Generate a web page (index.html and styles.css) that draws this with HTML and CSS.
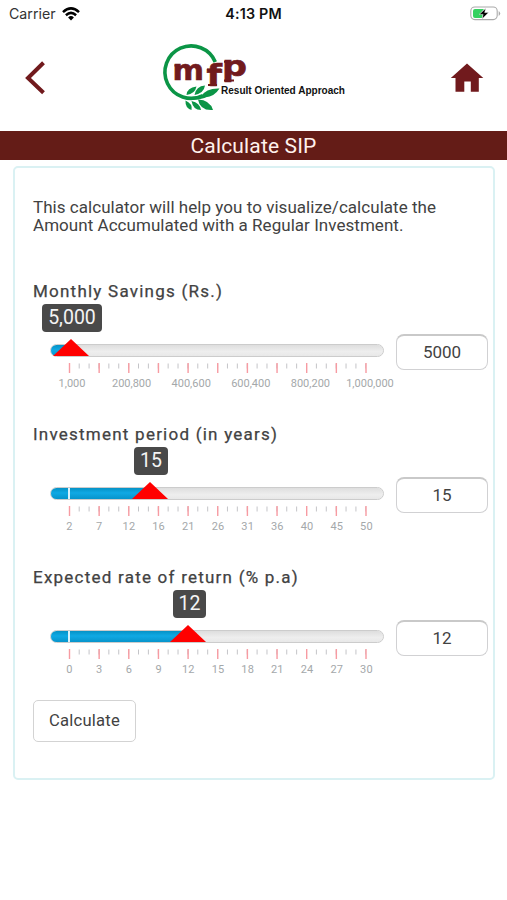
FILE: index.html
```html
<!DOCTYPE html>
<html lang="en">
<head>
<meta charset="utf-8">
<title>Calculate SIP</title>
<link rel="stylesheet" href="styles.css">
</head>
<body>
<div class="status">
  <div class="carrier">Carrier
    <svg width="18" height="14" viewBox="0 0 18 14" fill="none" stroke="#000" stroke-width="2.5"><path d="M1 5.1Q9-2.3 17 5.1M3.9 8.2Q9 3.6 14.1 8.2"/><path d="M6.1 10.4Q9 7.7 11.9 10.4L9 13.5z" fill="#000" stroke="none"/></svg>
  </div>
  <div class="time">4:13 PM</div>
  <svg class="battery" width="31" height="15" viewBox="0 0 31 15"><rect x=".8" y="1" width="26.4" height="12.6" rx="4" fill="#fff" stroke="#aaa" stroke-width="1.1"/><path d="M5 3h9l-4 5h3l-1 4H5q-2 0-2-2V5q0-2 2-2z" fill="#35d160"/><path d="M28.7 5v5q3-2.5 0-5z" fill="#aaa"/><path d="M15.800 2.200L9.200 8.400h3.900l-1 4.500 6.500-6.300h-3.900z" fill="#000" stroke="#fff" stroke-width=".5"/></svg>
</div>
<header class="header">
  <svg class="back" width="21" height="34" viewBox="0 0 21 34"><path d="M18.500 1.800L3 17l15.500 14.700" fill="none" stroke="#711a1d" stroke-width="4"/></svg>
  <svg class="logo" width="187" height="72" viewBox="160 41 187 72">
    <path d="M215.300 62A26.200 26.200 0 1 0 203 95.500" fill="none" stroke="#0b9546" stroke-width="3.600"/>
    <g fill="#0b9546">
      <path d="M188 97.500Q203 97 213 90L215 92Q204 101 189 100z"/>
      <path d="M186.500 95Q187 87.500 196.500 86.500Q195 94 186.500 95zM194.500 95Q196 86 205 85.500Q204 93 194.500 95zM201 96.500Q206 88 219.500 88.500Q213 99 201 96.500zM185.500 100.500Q193 104 191.500 110Q185 108 185.500 100.500zM191.500 101Q200 103 201 110Q193 110 191.500 101zM198 99.500Q210 100 213 110Q200 111 198 99.500z"/>
    </g>
    <g class="logo-letters">
      <text x="172.500" y="80.300" font-size="27.500" textLength="31.500" lengthAdjust="spacingAndGlyphs">m</text>
      <text x="206.500" y="85.500" font-size="30" textLength="15.500" lengthAdjust="spacingAndGlyphs">f</text>
      <text x="222" y="76.300" font-size="28.500" textLength="25" lengthAdjust="spacingAndGlyphs">p</text>
    </g>
    <path d="M174.500 65.500h4M207 69.500h14M208 85h9M224 61.800h4M224 80.500h10" fill="none" stroke="#711a1d" stroke-width="2"/>
    <text class="tagline" x="221" y="93.700" textLength="124" lengthAdjust="spacingAndGlyphs">Result Oriented Approach</text>
  </svg>
  <svg class="home" width="34" height="30" viewBox="0 0 34 30"><path d="M17 .5L33.300 15H28.800V28.800H20.800V18.500H14.300V28.800H5.500V15H.8z" fill="#711a1d"/></svg>
</header>
<h1 class="title">Calculate SIP</h1>
<main class="card">
  <p class="intro">This calculator will help you to visualize/calculate the<br>Amount Accumulated with a Regular Investment.</p>

  <section class="field">
    <h2>Monthly Savings (Rs.)</h2>
    <div class="row">
      <div class="slider savings">
        <div class="track"><div class="fill"></div></div>
        <div class="handle"><span class="bubble">5,000</span><i class="arrow"></i></div>
        <svg class="ticks" width="300" height="10"><path class="minor" d="M10.700 3H298"/><path class="major" d="M.8 5H299"/></svg>
        <div class="scale"><span>1,000</span><span>200,800</span><span>400,600</span><span>600,400</span><span>800,200</span><span>1,000,000</span></div>
      </div>
      <div class="value">5000</div>
    </div>
  </section>

  <section class="field">
    <h2>Investment period (in years)</h2>
    <div class="row">
      <div class="slider period">
        <div class="track"><div class="fill marked"></div></div>
        <div class="handle"><span class="bubble">15</span><i class="arrow"></i></div>
        <svg class="ticks" width="300" height="10"><path class="minor" d="M10.700 3H298"/><path class="major" d="M.8 5H299"/></svg>
        <div class="scale"><span>2</span><span>7</span><span>12</span><span>16</span><span>21</span><span>26</span><span>31</span><span>36</span><span>40</span><span>45</span><span>50</span></div>
      </div>
      <div class="value">15</div>
    </div>
  </section>

  <section class="field">
    <h2>Expected rate of return (% p.a)</h2>
    <div class="row">
      <div class="slider rate">
        <div class="track"><div class="fill marked"></div></div>
        <div class="handle"><span class="bubble">12</span><i class="arrow"></i></div>
        <svg class="ticks" width="300" height="10"><path class="minor" d="M10.700 3H298"/><path class="major" d="M.8 5H299"/></svg>
        <div class="scale"><span>0</span><span>3</span><span>6</span><span>9</span><span>12</span><span>15</span><span>18</span><span>21</span><span>24</span><span>27</span><span>30</span></div>
      </div>
      <div class="value">12</div>
    </div>
  </section>

  <button class="calculate">Calculate</button>
</main>
</body>
</html>
```
FILE: styles.css
```css
* { box-sizing: border-box; }
body { margin: 0; height: 900px; overflow: hidden; background: #fff; color: #424242; font-family: Roboto, sans-serif; }
svg { display: block; }

.status { display: grid; grid-template-columns: 1fr auto 1fr; height: 27px; padding: 0 6px 0 9px; align-items: center; font-family: Inter, sans-serif; color: #111; }
.carrier { display: flex; gap: 6px; align-items: center; font-size: 14.2px; color: #333; }
.time { margin-right: 3px; font-size: 14.3px; font-weight: 600; letter-spacing: .2px; }
.battery { justify-self: end; }

.header { display: flex; height: 104px; padding: 14px 23px 0 25px; align-items: flex-start; }
.back { margin-top: 20px; }
.logo { margin-left: 114px; }
.home { margin: 22px 0 0 auto; }
.logo-letters { font-family: "DejaVu Sans", sans-serif; font-weight: bold; fill: #711a1d; stroke: #711a1d; stroke-width: .6px; }
.tagline { font: bold 10px "Liberation Sans", sans-serif; fill: #111; }

.title { margin: 0; height: 29px; line-height: 30px; background: #641c17; color: #fff1ec; text-align: center; font-size: 21px; font-weight: 400; letter-spacing: .15px; }
.card { width: 482px; height: 614px; margin: 6px 0 0 13px; padding: 30px 5px 0 18px; border: 2px solid #daf1f3; border-radius: 5px; }
.intro { margin: 0 0 45px; font-size: 17px; letter-spacing: .04px; line-height: 18.4px; height: 38px; white-space: nowrap; }

.field { height: 143px; }
.field h2 { margin: 0; height: 20px; line-height: 20px; font-size: 17px; font-weight: 400; letter-spacing: 1.23px; white-space: nowrap; -webkit-text-stroke: .25px; }
.row { display: flex; justify-content: space-between; align-items: flex-start; padding-left: 18px; }
.slider { position: relative; margin-left: -1px; width: 334px; padding-top: 43px; }
.track { height: 13px; border: 1px solid #ccc; border-radius: 7px; overflow: hidden; background: linear-gradient(#dedede, #eee 60%, #e8e8e8); }
.fill { height: 100%; background: linear-gradient(#0592c6, #10a9e4 45%, #0794cb); }
.period .track, .rate .track, .savings .track { background-clip: padding-box; }
.marked { display: flex; }
.marked::before { content: ""; width: 1.5px; margin-left: 17px; background: #d9f2fc; }
.handle { position: absolute; top: 3px; left: 0; width: 0; display: flex; flex-direction: column; align-items: center; }
.bubble { height: 28px; line-height: 28px; padding: 0 6px; border-radius: 4px; background: #494949; color: #f4f4f4; font-size: 19.5px; white-space: nowrap; }
.arrow { margin-top: 7px; border: solid transparent; border-width: 0 18px 17.5px; border-bottom-color: #f00; }
.savings .fill { width: 20px; }
.savings .handle { left: 20.5px; }
.savings .bubble { margin-left: 3px; }
.period .fill { width: 98px; }
.period .handle { left: 99.5px; }
.period .bubble { margin-left: 3px; }
.rate .fill { width: 137px; }
.rate .handle { left: 138px; }
.rate .bubble { margin-left: 3px; }
.ticks { margin: 6px 0 0 18px; }
.minor { fill: none; stroke: #c4c4c8; stroke-width: 5; stroke-dasharray: 1 8.883; }
.major { fill: none; stroke: #f79ba2; stroke-width: 10; stroke-dasharray: 1.4 28.250; }
.scale { display: flex; justify-content: space-between; width: 297px; margin: 3px 0 0 19.5px; font-size: 11px; line-height: 15px; color: #a4a8aa; letter-spacing: .1px; }
.scale span { display: flex; justify-content: center; width: 0; }
.savings .scale { width: 298px; margin-left: 22px; letter-spacing: 0; }
.value { width: 92px; height: 36px; margin-top: 33px; border: 1.5px solid #d1d1d3; border-top: 2px solid #c9c9c9; border-radius: 8px; text-align: center; font-size: 17px; line-height: 33px; }
.calculate { display: block; width: 103px; height: 42px; margin-top: -10px; padding: 0 0 2px; border: 1.5px solid #d3d3d3; border-radius: 5px; background: #fff; color: #424242; font: 16.6px Roboto, sans-serif; letter-spacing: .2px; }
```
